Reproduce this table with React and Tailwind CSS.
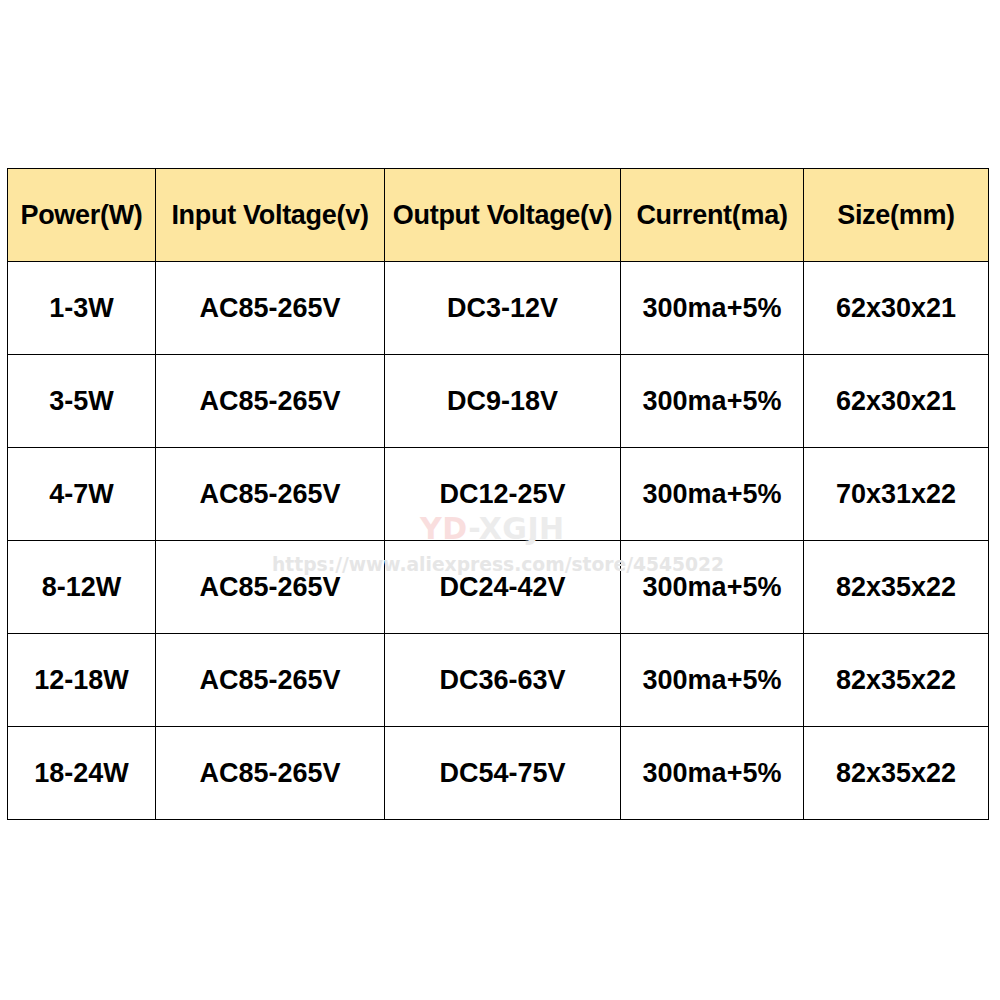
import React from "react";

const headers = ["Power(W)", "Input Voltage(v)", "Output Voltage(v)", "Current(ma)", "Size(mm)"];
const rows = [
  ["1-3W", "AC85-265V", "DC3-12V", "300ma+5%", "62x30x21"],
  ["3-5W", "AC85-265V", "DC9-18V", "300ma+5%", "62x30x21"],
  ["4-7W", "AC85-265V", "DC12-25V", "300ma+5%", "70x31x22"],
  ["8-12W", "AC85-265V", "DC24-42V", "300ma+5%", "82x35x22"],
  ["12-18W", "AC85-265V", "DC36-63V", "300ma+5%", "82x35x22"],
  ["18-24W", "AC85-265V", "DC54-75V", "300ma+5%", "82x35x22"],
];
const widths = ["w-[148px]", "w-[229px]", "w-[236px]", "w-[183px]", "w-[185px]"];

export default function App() {
  return (
    <div className="relative w-[1000px] h-[1000px] bg-white pt-[168px] pl-[7px]" style={{ fontFamily: '"Liberation Sans", Arial, sans-serif' }}>
      <table className="border-collapse table-fixed w-[982px] text-[27px] font-bold text-black">
        <colgroup>
          {widths.map((w, i) => (
            <col key={i} className={w} />
          ))}
        </colgroup>
        <thead>
          <tr className="h-[93px] bg-[#fde6a0]">
            {headers.map((h) => (
              <th key={h} className="border border-black p-0 text-center font-bold whitespace-nowrap tracking-[-0.3px]">
                {h}
              </th>
            ))}
          </tr>
        </thead>
        <tbody>
          {rows.map((r, i) => (
            <tr key={i} className="h-[93px]">
              {r.map((c, j) => (
                <td key={j} className="border border-black p-0 text-center whitespace-nowrap">
                  {c}
                </td>
              ))}
            </tr>
          ))}
        </tbody>
      </table>
      <div className="pointer-events-none absolute left-[420px] top-[514px] text-[30px] font-bold leading-none tracking-[0.5px]" style={{ fontFamily: '"DejaVu Sans", sans-serif' }}>
        <span className="text-[#f9dede]">YD</span>
        <span className="text-[#ececec]">-XGJH</span>
      </div>
      <div className="pointer-events-none absolute left-[272px] top-[556px] text-[18.7px] font-bold leading-none text-[#e6e6e6]" style={{ fontFamily: '"DejaVu Sans", sans-serif' }}>
        https://www.aliexpress.com/store/4545022
      </div>
    </div>
  );
}
